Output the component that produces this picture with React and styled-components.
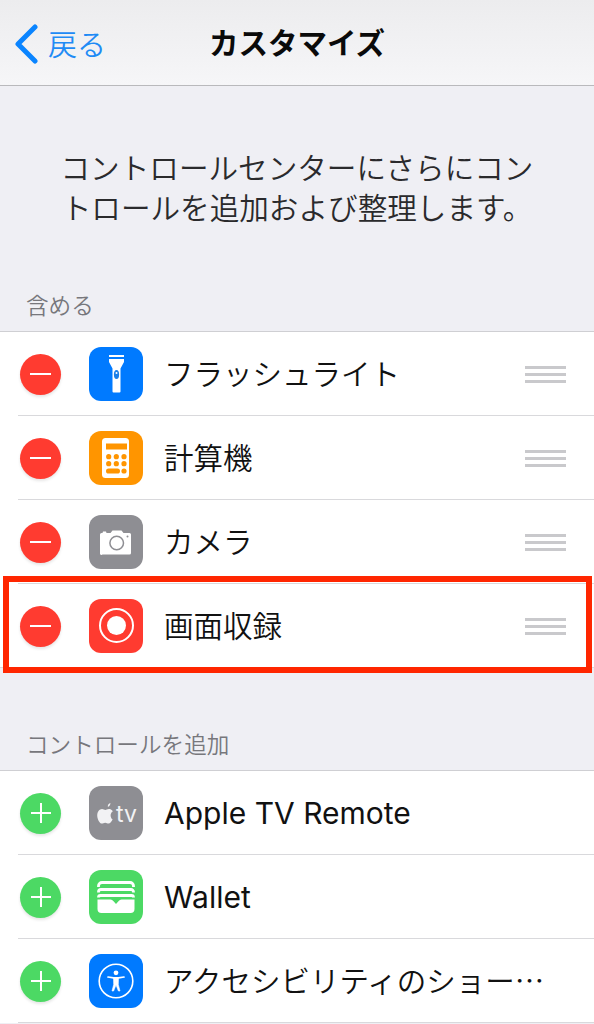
import React from "react";
import styled, { createGlobalStyle } from "styled-components";

const Global = createGlobalStyle`
  html, body { margin: 0; padding: 0; background: #efeff4; }
  body { font-family: Inter, "Noto Sans CJK JP", sans-serif; overflow: hidden; }
`;

const Page = styled.div`
  width: 594px;
  height: 1024px;
  overflow: hidden;
  position: relative;
  background: #efeff4;
  display: flex;
  flex-direction: column;
`;

const NavBar = styled.header`
  height: 85px;
  flex: none;
  box-sizing: content-box;
  border-bottom: 1px solid #b9b9bc;
  background: linear-gradient(#ececee, #f6f6f8);
  position: relative;
  display: flex;
  align-items: center;
  justify-content: center;
`;

const Back = styled.div`
  position: absolute;
  left: 14px;
  top: 22px;
  display: flex;
  align-items: center;
  gap: 10px;
  color: #1f8bf5;
  font-size: 29px;
  line-height: 40px;
  font-family: "Noto Sans CJK JP", sans-serif;
  font-weight: 350;
  & > svg {
    margin-top: 2px;
  }
`;

const Title = styled.h1`
  margin: 0 0 3px 0;
  font-size: 29.5px;
  font-weight: 700;
  color: #0a0a0a;
  font-family: "Noto Sans CJK JP", sans-serif;
`;

const Intro = styled.p`
  margin: 0;
  padding: 61px 59px 0;
  height: 158px;
  box-sizing: border-box;
  text-align: center;
  font-size: 29.6px;
  line-height: 40px;
  color: #2a2a2c;
  font-family: "Noto Sans CJK JP", sans-serif;
  font-weight: 350;
`;

const SectionLabel = styled.div`
  height: ${(p) => p.$h}px;
  box-sizing: border-box;
  padding: ${(p) => p.$top}px 26px 0;
  font-size: 22.6px;
  line-height: 32px;
  color: #77777c;
  font-family: "Noto Sans CJK JP", sans-serif;
  font-weight: 350;
`;

const List = styled.ul`
  margin: 0;
  padding: 0;
  list-style: none;
  background: #fff;
  border-top: 1px solid #cfcfd3;
`;

const Row = styled.li`
  height: 84px;
  box-sizing: border-box;
  position: relative;
  display: flex;
  align-items: center;
  padding: 0 28px 0 20px;
  &::after {
    content: "";
    position: absolute;
    left: ${(p) => (p.$last ? 0 : 18)}px;
    right: 0;
    bottom: 0;
    height: 1px;
    background: #d9d9dc;
  }
`;

const RoundButton = styled.div`
  width: 41px;
  height: 41px;
  border-radius: 50%;
  flex: none;
  background: ${(p) => p.$color};
  box-shadow: 0 2px 3px rgba(0, 0, 0, 0.1);
  display: flex;
  align-items: center;
  justify-content: center;
`;

const Tile = styled.div`
  width: 54px;
  height: 54px;
  flex: none;
  margin-left: 28px;
  border-radius: 12px;
  background: ${(p) => p.$color};
  display: flex;
  align-items: center;
  justify-content: center;
`;

const Label = styled.div`
  flex: 1;
  margin-left: 21px;
  margin-bottom: ${(p) => (p.$latin ? 0 : 4)}px;
  font-size: ${(p) => (p.$latin ? 30 : 29.5)}px;
  line-height: 40px;
  color: #111;
  white-space: nowrap;
  font-family: ${(p) => (p.$latin ? "Inter, " : "")}"Noto Sans CJK JP", sans-serif;
  font-weight: ${(p) => (p.$latin ? 400 : 350)};
`;

const Grip = styled.div`
  width: 41px;
  flex: none;
  display: flex;
  flex-direction: column;
  gap: 4px;
  & > span {
    height: 3px;
    background: #c9c9cc;
  }
`;

const Highlight = styled.div`
  position: absolute;
  left: 3px;
  right: 2px;
  top: 576px;
  height: 97px;
  box-sizing: border-box;
  border: 6px solid #ff2600;
  pointer-events: none;
`;

const Minus = () => (
  <svg width="22" height="4" viewBox="0 0 22 4"><rect y="1" width="21" height="2" fill="#fff" /></svg>
);
const Plus = () => (
  <svg width="22" height="22" viewBox="0 0 22 22"><path d="M1 11h20M11 1v20" stroke="#fff" strokeWidth="2" /></svg>
);

const Flashlight = () => (
  <svg width="54" height="54" viewBox="0 0 54 54">
    <rect x="20" y="8" width="15" height="2" fill="#fff" />
    <path d="M20 12h15v3l-3.500 6.500v23a1 1 0 0 1-1 1h-6a1 1 0 0 1-1-1v-23L20 15z" fill="#fff" />
    <ellipse cx="27.500" cy="27.500" rx="2.600" ry="4.500" fill="#1a7fe8" />
    <circle cx="27.500" cy="26" r="1" fill="#fff" />
  </svg>
);

const Calculator = () => {
  const dots = [];
  [25.7, 32.7].forEach((y) => [19.7, 27.3, 35].forEach((x) => dots.push([x, y])));
  return (
    <svg width="54" height="54" viewBox="0 0 54 54">
      <rect x="13" y="7" width="27" height="40" rx="3.500" fill="#fff" />
      <rect x="17" y="12.500" width="21" height="6" fill="#ff9500" />
      {dots.map(([x, y]) => <circle key={`${x}-${y}`} cx={x} cy={y} r="2.600" fill="#ff9500" />)}
      <rect x="17" y="37.400" width="14" height="5.200" rx="2.600" fill="#ff9500" />
      <circle cx="35" cy="40" r="2.600" fill="#ff9500" />
    </svg>
  );
};

const Camera = () => (
  <svg width="54" height="54" viewBox="0 0 54 54">
    <path d="M11 19.500a1.500 1.500 0 0 1 1.500-1.500h1l.5-1.500h3l.5 1.500h4l2-2.500h9l2 2.500h6a1.500 1.500 0 0 1 1.500 1.500V38a1.500 1.500 0 0 1-1.500 1.500h-27A1.500 1.500 0 0 1 11 38z" fill="#fff" />
    <circle cx="27.700" cy="28" r="6.800" fill="#fff" stroke="#8e8e93" strokeWidth="1.500" />
    <circle cx="38.500" cy="21.500" r="1" fill="#8e8e93" />
  </svg>
);

const Record = () => (
  <svg width="54" height="54" viewBox="0 0 54 54">
    <circle cx="27.500" cy="26.500" r="16.500" fill="none" stroke="#fff" strokeWidth="2" />
    <circle cx="27.500" cy="26.500" r="9.500" fill="#fff" />
  </svg>
);

const AppleTv = () => (
  <svg width="54" height="54" viewBox="0 0 54 54">
    <g transform="translate(-7 -9) scale(1.45)">
      <path d="M17.800 20.600c1-.1 1.900-1.300 1.800-2.600-1 .1-2 1.300-1.800 2.600zM21 29.500c-.5 1-1.600 2.600-2.700 2.600-.9 0-1.200-.6-2.300-.6s-1.500.6-2.300.6c-1.500 0-3.200-3-3.200-5.600 0-2.500 1.600-4.400 3.300-4.400 1 0 1.600.6 2.300.6s1.200-.7 2.500-.7c.8 0 2 .4 2.700 1.600-2.200 1.300-1.900 4.700 0 5.900z" fill="#f2f2f4" />
    </g>
    <text x="27" y="36" fontFamily="Inter, sans-serif" fontSize="23" fontWeight="400" fill="#f2f2f4">tv</text>
  </svg>
);

const WalletIcon = () => (
  <svg width="54" height="54" viewBox="0 0 54 54">
    <g fill="none" stroke="#fff" strokeWidth="2.800">
      <path d="M9.500 17v-1a3.500 3.500 0 0 1 3.500-3.500h28a3.500 3.500 0 0 1 3.500 3.500v1" />
      <path d="M9.500 22.500v-.5a2.500 2.500 0 0 1 2.500-2.500h30a2.500 2.500 0 0 1 2.500 2.500v.5" />
      <path d="M9.500 27.500a2 2 0 0 1 2-2h31a2 2 0 0 1 2 2" />
    </g>
    <path d="M8.500 29.500h13c1.300 0 2 .8 2.800 1.600l2.700 3 2.700-3c.8-.8 1.500-1.600 2.800-1.600h13v9.500a4 4 0 0 1-4 4h-29a4 4 0 0 1-4-4z" fill="#fff" />
  </svg>
);

const Accessibility = () => (
  <svg width="54" height="54" viewBox="0 0 54 54">
    <circle cx="27" cy="27" r="16.800" fill="none" stroke="#fff" strokeWidth="1.600" />
    <circle cx="27" cy="18.800" r="2.400" fill="#fff" />
    <path d="M19 23l5.500.8h5l5.500-.8" fill="none" stroke="#fff" strokeWidth="1.700" strokeLinecap="round" />
    <path d="M24.500 23.500h5l-.2 7 1.700 6.500h-1.600L27 31l-2.400 6H23l1.700-6.500z" fill="#fff" stroke="#fff" strokeWidth=".6" strokeLinejoin="round" />
  </svg>
);

const included = [
  { label: "フラッシュライト", color: "#007aff", Icon: Flashlight },
  { label: "計算機", color: "#ff9500", Icon: Calculator },
  { label: "カメラ", color: "#8e8e93", Icon: Camera },
  { label: "画面収録", color: "#ff3b30", Icon: Record, last: true },
];

const more = [
  { label: "Apple TV Remote", latin: true, color: "#8e8e93", Icon: AppleTv },
  { label: "Wallet", latin: true, color: "#4cd964", Icon: WalletIcon },
  { label: "アクセシビリティのショー…", color: "#007aff", Icon: Accessibility },
];

const ItemRow = ({ item, action, grip }) => (
  <Row $last={item.last}>
    <RoundButton $color={action === "add" ? "#4cd964" : "#ff3b30"}>
      {action === "add" ? <Plus /> : <Minus />}
    </RoundButton>
    <Tile $color={item.color}><item.Icon /></Tile>
    <Label $latin={item.latin}>{item.label}</Label>
    {grip && <Grip><span /><span /><span /></Grip>}
  </Row>
);

export default function App() {
  return (
    <Page>
      <Global />
      <NavBar>
        <Back>
          <svg width="24" height="40" viewBox="0 0 24 40">
            <path d="M21 3L4 20l17 17" fill="none" stroke="#0a84ff" strokeWidth="5" strokeLinecap="round" strokeLinejoin="round" />
          </svg>
          <span>戻る</span>
        </Back>
        <Title>カスタマイズ</Title>
      </NavBar>
      <Intro>コントロールセンターにさらにコントロールを追加および整理します。</Intro>
      <SectionLabel $h={87} $top={45}>含める</SectionLabel>
      <List>
        {included.map((item) => <ItemRow key={item.label} item={item} action="remove" grip />)}
      </List>
      <SectionLabel $h={102} $top={60}>コントロールを追加</SectionLabel>
      <List>
        {more.map((item) => <ItemRow key={item.label} item={item} action="add" />)}
      </List>
      <Highlight />
    </Page>
  );
}
